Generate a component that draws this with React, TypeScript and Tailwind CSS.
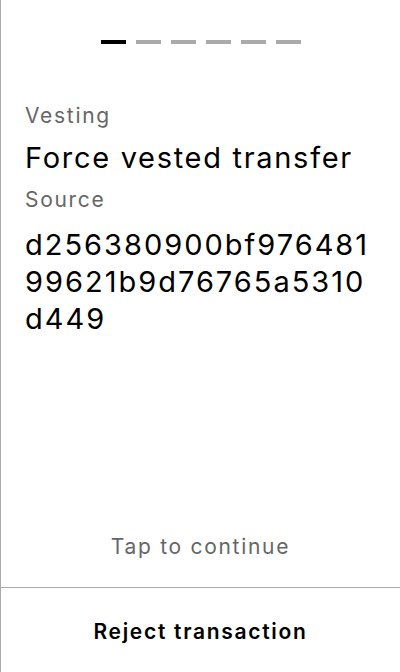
export default function App() {
  const steps = [0, 1, 2, 3, 4, 5];
  const current = 0;

  return (
    <div
      className="flex h-[672px] w-[400px] flex-col border-l border-[#aaaaaa] bg-white text-black tracking-[1.7px]"
      style={{ fontFamily: "Inter, 'Noto Sans', sans-serif" }}
    >
      {/* Step indicator */}
      <div className="flex justify-center gap-[10px] pt-10">
        {steps.map((s) => (
          <div
            key={s}
            className={`h-1 w-[25px] ${s === current ? "bg-black" : "bg-[#aaaaaa]"}`}
          />
        ))}
      </div>

      {/* Transaction details */}
      <div className="flex-1 px-6 pt-[58px]">
        <p className="mb-[10px] text-[21px] leading-7 text-[#666666]">Vesting</p>
        <p className="mb-[10px] text-[29px] leading-[36px]">Force vested transfer</p>
        <p className="mb-3 text-[21px] leading-7 text-[#666666]">Source</p>
        <p className="break-all text-[29px] leading-[37px] tracking-[2px]">
          d256380900bf97648199621b9d76765a5310d449
        </p>
      </div>

      <p className="pb-[26px] text-center text-[21px] leading-7 text-[#666666]">
        Tap to continue
      </p>

      <button className="border-t border-[#aaaaaa] pt-[30px] pb-[26px] text-center text-[21px] font-semibold leading-7 tracking-[1.7px]">
        Reject transaction
      </button>
    </div>
  );
}
